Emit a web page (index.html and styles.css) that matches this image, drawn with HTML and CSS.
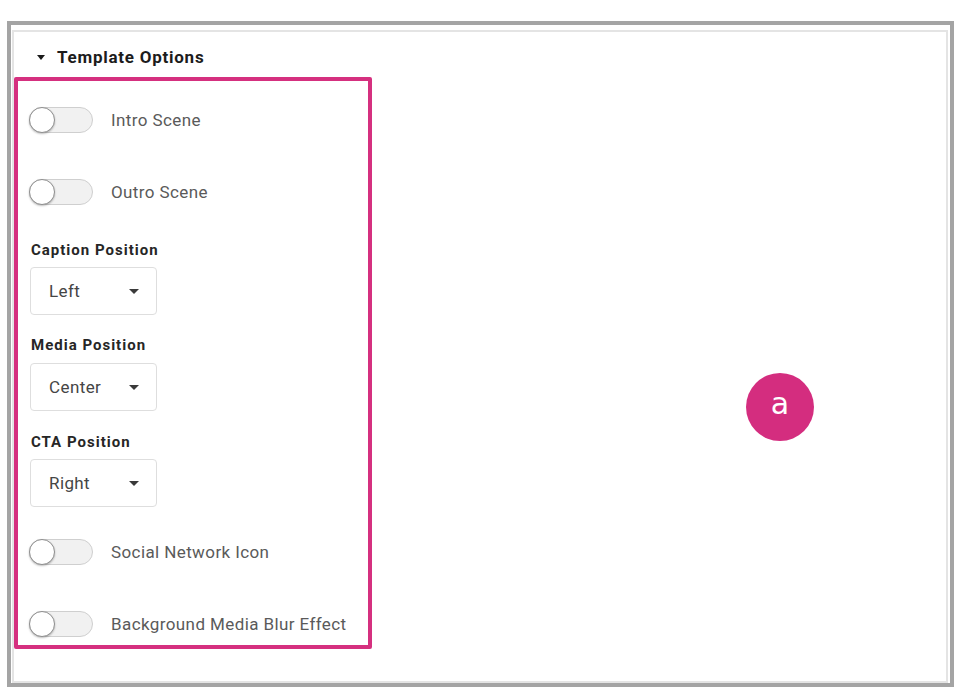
FILE: index.html
```html
<!DOCTYPE html>
<html>
<head>
<meta charset="utf-8">
<link rel="stylesheet" href="styles.css">
</head>
<body>
<div class="frame">
  <div class="panel">
    <div class="header">
      <span class="tri"></span>
      <span class="title">Template Options</span>
    </div>
    <div class="box">
      <div class="row first"><span class="toggle"><span class="knob"></span></span><span class="tlabel">Intro Scene</span></div>
      <div class="row gap46"><span class="toggle"><span class="knob"></span></span><span class="tlabel">Outro Scene</span></div>
      <div class="flabel m36">Caption Position</div>
      <div class="select m8"><span class="val">Left</span><span class="caret"></span></div>
      <div class="flabel m21">Media Position</div>
      <div class="select m9"><span class="val">Center</span><span class="caret"></span></div>
      <div class="flabel m22">CTA Position</div>
      <div class="select m8"><span class="val">Right</span><span class="caret"></span></div>
      <div class="row m32"><span class="toggle"><span class="knob"></span></span><span class="tlabel">Social Network Icon</span></div>
      <div class="row gap46"><span class="toggle"><span class="knob"></span></span><span class="tlabel">Background Media Blur Effect</span></div>
    </div>
  </div>
  <div class="badge">a</div>
</div>
</body>
</html>
```
FILE: styles.css
```css
html, body {
  margin: 0;
  padding: 0;
  background: #ffffff;
}
body {
  font-family: Roboto, "Liberation Sans", sans-serif;
}
.frame {
  position: relative;
  margin: 21px 0 0 7px;
  width: 947px;
  height: 666px;
  border: 4px solid #a4a4a4;
  padding: 5px 2px 0 1px;
  box-sizing: border-box;
  display: flex;
  flex-direction: column;
}
.panel {
  flex: 1;
  border: 2px solid #e4e4e4;
  background: #fff;
  display: flex;
  flex-direction: column;
  align-items: flex-start;
}
.header {
  display: flex;
  align-items: center;
  height: 22px;
  margin: 14px 0 9px 23px;
}
.tri {
  width: 0;
  height: 0;
  border-left: 4.5px solid transparent;
  border-right: 4.5px solid transparent;
  border-top: 5px solid #1a1a1a;
  margin-right: 12px;
}
.title {
  font-size: 17px;
  font-weight: 700;
  color: #1c1c1c;
  line-height: 22px;
  letter-spacing: 0.75px;
}
.box {
  width: 358px;
  box-sizing: border-box;
  border: 4px solid #d5307f;
  border-radius: 2px;
  padding: 26px 0 8px 11px;
  display: flex;
  flex-direction: column;
  align-items: flex-start;
}
.row {
  display: flex;
  align-items: center;
  height: 26px;
}
.gap46 { margin-top: 46px; }
.m36 { margin-top: 36px; }
.m8 { margin-top: 8px; }
.m9 { margin-top: 9px; }
.m21 { margin-top: 21px; }
.m22 { margin-top: 22px; }
.m32 { margin-top: 32px; }
.toggle {
  position: relative;
  width: 64px;
  height: 26px;
  box-sizing: border-box;
  border: 1px solid #cfcfcf;
  border-radius: 13px;
  background: #f1f1f1;
  flex: none;
}
.knob {
  position: absolute;
  left: -1px;
  top: -1px;
  width: 26px;
  height: 26px;
  box-sizing: border-box;
  border-radius: 50%;
  background: #ffffff;
  border: 1.5px solid #8f8f8f;
  box-shadow: 0 1px 2px rgba(0,0,0,0.25);
}
.tlabel {
  margin-left: 18px;
  font-size: 17px;
  color: #5a5a5a;
  letter-spacing: 0.4px;
}
.flabel {
  margin-left: 2px;
  font-size: 15px;
  font-weight: 700;
  line-height: 18px;
  color: #262626;
  letter-spacing: 1px;
}
.select {
  margin-left: 1px;
  width: 127px;
  height: 48px;
  box-sizing: border-box;
  border: 1px solid #dedede;
  border-radius: 4px;
  display: flex;
  align-items: center;
  padding: 0 17px 0 18px;
}
.val {
  flex: 1;
  font-size: 17px;
  color: #454545;
  letter-spacing: 0.4px;
}
.caret {
  width: 0;
  height: 0;
  border-left: 5px solid transparent;
  border-right: 5px solid transparent;
  border-top: 5px solid #3a3a3a;
}
.badge {
  position: absolute;
  left: 735px;
  top: 348px;
  width: 68px;
  height: 68px;
  border-radius: 50%;
  background: #d42d7f;
  color: #ffffff;
  font-family: "DejaVu Sans", sans-serif;
  font-size: 30px;
  line-height: 62px;
  text-align: center;
}
```
